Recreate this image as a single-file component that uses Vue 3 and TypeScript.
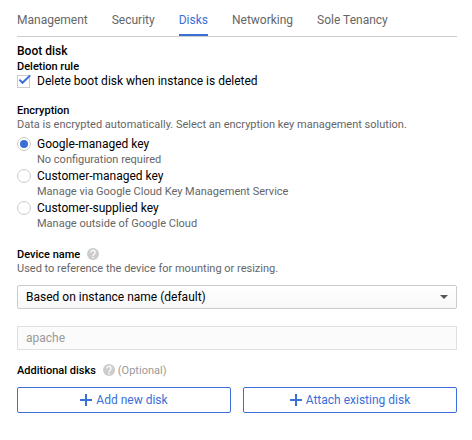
<script setup lang="ts">
import { ref } from 'vue'

interface KeyOption {
  id: string
  label: string
  hint: string
}

const tabs: string[] = ['Management', 'Security', 'Disks', 'Networking', 'Sole Tenancy']
const activeTab = ref<string>('Disks')
const deleteBootDisk = ref<boolean>(true)
const selectedKey = ref<string>('google')
const keyOptions: KeyOption[] = [
  { id: 'google', label: 'Google-managed key', hint: 'No configuration required' },
  { id: 'customer', label: 'Customer-managed key', hint: 'Manage via Google Cloud Key Management Service' },
  { id: 'supplied', label: 'Customer-supplied key', hint: 'Manage outside of Google Cloud' },
]
const actions: string[] = ['Add new disk', 'Attach existing disk']
</script>

<template>
  <main class="panel">
    <nav class="tabs">
      <a
        v-for="tab in tabs"
        :key="tab"
        class="tab"
        :class="{ active: tab === activeTab }"
        @click="activeTab = tab"
      >{{ tab }}</a>
    </nav>

    <section class="boot">
      <h2 class="title">Boot disk</h2>
      <h3 class="heading">Deletion rule</h3>
      <div class="check-row" @click="deleteBootDisk = !deleteBootDisk">
        <span class="checkbox">
          <svg v-if="deleteBootDisk" class="tick" viewBox="0 0 13 13">
            <path d="M2.4 4.6 5.5 7.8 13.2 0.4" fill="none" stroke="#3a6fd8" stroke-width="2" />
          </svg>
        </span>
        <span class="label">Delete boot disk when instance is deleted</span>
      </div>
    </section>

    <section class="encryption">
      <h3 class="heading">Encryption</h3>
      <p class="hint">Data is encrypted automatically. Select an encryption key management solution.</p>
      <div class="options">
        <div v-for="opt in keyOptions" :key="opt.id" class="option" @click="selectedKey = opt.id">
          <span class="radio" :class="{ on: opt.id === selectedKey }"></span>
          <div>
            <div class="label">{{ opt.label }}</div>
            <div class="hint">{{ opt.hint }}</div>
          </div>
        </div>
      </div>
    </section>

    <section class="device">
      <h3 class="heading">
        <span>Device name</span>
        <svg class="help" viewBox="0 0 12 12">
          <circle cx="6" cy="6" r="6" fill="#ccc" />
          <path d="M3.9 4.5a2.1 2.1 0 1 1 3.6 1.4C6.8 6.6 6 6.9 6 8" fill="none" stroke="#fff" stroke-width="1.3" />
          <path d="M5.3 8.8h1.4v1.4H5.3z" fill="#fff" />
        </svg>
      </h3>
      <p class="hint">Used to reference the device for mounting or resizing.</p>
      <div class="select">
        <span>Based on instance name (default)</span>
        <svg class="arrow" viewBox="0 0 8 4"><path d="M0 0h8L4 4z" fill="#555" /></svg>
      </div>
      <div class="input">apache</div>
    </section>

    <section class="additional">
      <h3 class="heading">
        <span>Additional disks</span>
        <svg class="help" viewBox="0 0 12 12">
          <circle cx="6" cy="6" r="6" fill="#ccc" />
          <path d="M3.9 4.5a2.1 2.1 0 1 1 3.6 1.4C6.8 6.6 6 6.9 6 8" fill="none" stroke="#fff" stroke-width="1.3" />
          <path d="M5.3 8.8h1.4v1.4H5.3z" fill="#fff" />
        </svg>
        <span class="optional">(Optional)</span>
      </h3>
      <div class="buttons">
        <button v-for="action in actions" :key="action" class="button" type="button">
          <svg class="plus" viewBox="0 0 12 12"><path d="M5 0h2v5h5v2H7v5H5V7H0V5h5z" fill="#3a6fd8" /></svg>
          <span>{{ action }}</span>
        </button>
      </div>
    </section>
  </main>
</template>

<style>
body {
  background: #fff;
}
</style>

<style scoped>
.panel {
  box-sizing: border-box;
  width: 472px;
  height: 440px;
  padding: 4px 15px 0 17px;
  font-family: Roboto, "Liberation Sans", sans-serif;
  font-size: 12px;
  color: #212121;
  overflow: hidden;
}
h2,
h3,
p {
  margin: 0;
}
.tabs {
  display: flex;
  gap: 24px;
  height: 32px;
  border-bottom: 1px solid #ccc;
}
.tab {
  box-sizing: border-box;
  height: 32px;
  line-height: 32px;
  color: #666;
  white-space: nowrap;
}
.tab.active {
  color: #3a6fd8;
  border-bottom: 2px solid #3a6fd8;
}
.boot {
  padding-top: 6px;
}
.title,
.heading {
  display: flex;
  align-items: center;
  color: #000;
  font-weight: 500;
  white-space: nowrap;
}
.title {
  height: 16px;
  font-size: 12px;
}
.heading {
  height: 14px;
  font-size: 11px;
}
.check-row {
  display: flex;
  align-items: center;
  gap: 7px;
  height: 16px;
}
.checkbox {
  box-sizing: border-box;
  width: 13px;
  height: 13px;
  border: 1px solid #ccc;
}
.tick {
  display: block;
  width: 13px;
  height: 13px;
  margin: -1px;
  overflow: visible;
}
.label {
  line-height: 16px;
  color: #000;
  white-space: nowrap;
}
.hint {
  font-size: 11px;
  line-height: 16px;
  color: #666;
  white-space: nowrap;
}
.encryption {
  padding-top: 14px;
}
.options {
  padding-top: 3px;
}
.option {
  display: flex;
  gap: 6px;
  height: 32px;
}
.radio {
  box-sizing: border-box;
  display: flex;
  align-items: center;
  justify-content: center;
  width: 14px;
  height: 14px;
  margin-top: 1px;
  border: 1px solid #ccc;
  border-radius: 50%;
}
.radio.on::after {
  content: "";
  width: 8px;
  height: 8px;
  border-radius: 50%;
  background: #3a6fd8;
}
.device {
  padding-top: 15px;
}
.help {
  width: 12px;
  height: 12px;
  margin-left: 7px;
}
.select,
.input {
  box-sizing: border-box;
  display: flex;
  align-items: center;
  height: 24px;
  padding: 0 8px;
  border: 1px solid #ccc;
}
.select {
  justify-content: space-between;
  margin-top: 8px;
  border-radius: 2px;
  background: linear-gradient(#fff, #f8f8f8);
  color: #000;
}
.arrow {
  width: 8px;
  height: 4px;
}
.input {
  margin-top: 17px;
  border-color: #e0e0e0;
  background: #fbfbfb;
  color: #999;
}
.additional {
  padding-top: 13px;
}
.optional {
  margin-left: 3px;
  color: #999;
  font-weight: 400;
}
.buttons {
  display: grid;
  grid-template-columns: 1fr 1fr;
  gap: 12px;
  padding-top: 10px;
}
.button {
  display: flex;
  align-items: center;
  justify-content: center;
  gap: 4px;
  height: 26px;
  padding: 0;
  border: 1px solid #3a6fd8;
  border-radius: 2px;
  background: #fff;
  font: inherit;
  color: #3a6fd8;
}
.plus {
  width: 12px;
  height: 12px;
}
</style>
